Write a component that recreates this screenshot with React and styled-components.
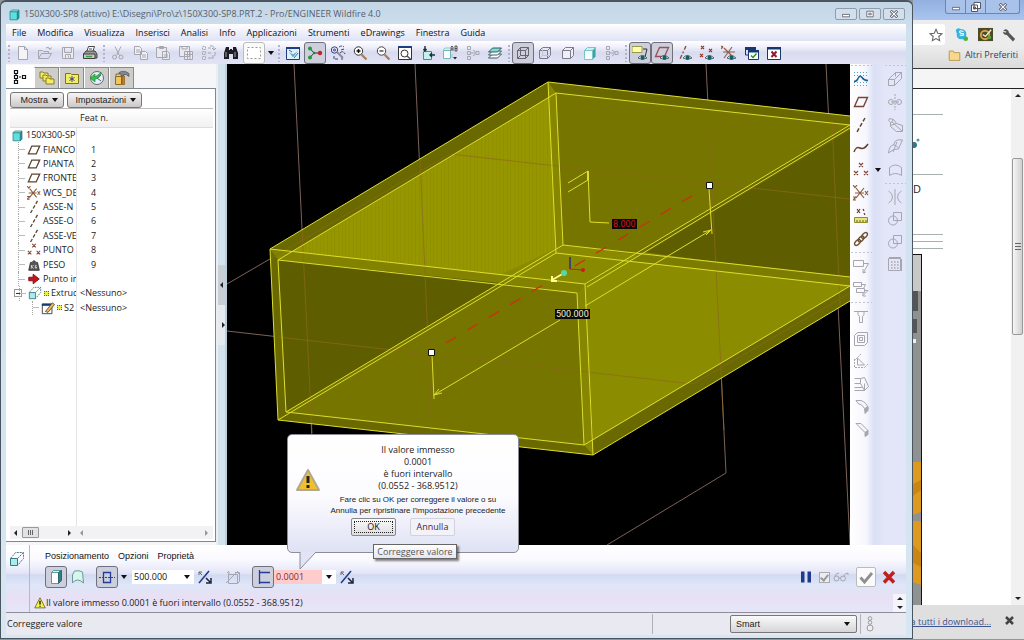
import React from 'react'
import styled, { createGlobalStyle } from 'styled-components'

const INK = '#222'
const GRAY = '#a6a6b0'
const BROWN = '#5c4630'

const GlobalStyle = createGlobalStyle`
  * {
    box-sizing: border-box;
  }
  body {
    margin: 0;
    font-family: 'Open Sans', sans-serif;
    font-size: 9px;
    line-height: 14px;
    color: ${INK};
  }
  button, input, select {
    font: inherit;
    color: inherit;
    margin: 0;
    padding: 0;
  }
`

const Desktop = styled.div`
  display: grid;
  grid-template-columns: minmax(0, 1fr) 111px;
  min-height: 100vh;
  background: #8e979c;
`

/* ---------- drawings ---------- */

const cube = (front, top, side, stroke) => (
  <g fill={front} stroke={stroke} strokeWidth="1">
    <path d="M2.500 4.500h9v10h-9z" />
    <path d="M2.500 4.500l2-2h9l-2 2z" fill={top} />
    <path d="M11.500 14.500l2-2v-10l-2 2z" fill={side} />
  </g>
)

const eye = (
  <g>
    <path d="M6 13q4-5 9 0q-5 3-9 0" fill="#e8f4f0" stroke="#345" strokeWidth=".8" />
    <circle cx="10.6" cy="12.7" r="2.1" fill="#126060" />
  </g>
)

const treeGray = (
  <path
    d="M2.500 1.500h3v3h-3zM2.500 6.500h3v3h-3zM2.500 11.500h3v3h-3zM5.500 8h5M11 6.500h3v3h-3zM8 5l2.500 2M8 11l2.500-2"
    fill="none"
    stroke={GRAY}
  />
)

const ICONS = {
  fresh: <path d="M3.500 1.500h6l3 3v10h-9zM9.500 1.500v3h3" fill="#f4f4f8" stroke={GRAY} />,
  open: <path d="M1.500 13.500v-8h4l1 1h5v2M1.500 13.500l3-5h10l-3 5zM9 3q3-2 4 1M11.500 3.500l2 1 1-2" fill="none" stroke={GRAY} />,
  save: <path d="M2.500 2.500h11v11h-11zM4.500 2.500v5h7v-5M5.500 13.500v-4h5v4M8.500 10.500v2" fill="#ebebf0" stroke={GRAY} />,
  print: (
    <g stroke="#333" strokeWidth=".9">
      <path d="M5 6l1.500-4.500h6L11 6" fill="#fff" />
      <path d="M1.500 9l2.500-3h9l2 3v4h-13.500z" fill="#9a9a9a" />
      <path d="M1.500 9h11.500v4.500h-11.500z" fill="#c9c9c4" />
      <path d="M4 11.500h6" stroke="#3aa23a" strokeWidth="1.500" />
      <path d="M7 4h3" />
    </g>
  ),
  cut: (
    <g fill="none" stroke={GRAY}>
      <path d="M5 1.500l4.500 9M11 1.500l-4.500 9" />
      <circle cx="4.500" cy="12" r="2" />
      <circle cx="11" cy="12" r="2" />
    </g>
  ),
  copy: <path d="M1.500 1.500h5l2 2v6h-7zM3 5h4M3 7h4M7.500 6.500h5l2 2v6h-7zM9 10h4M9 12h4" fill="#f0f0f5" stroke={GRAY} />,
  paste: <path d="M1.500 2.500h10v10h-10zM4.500 1.500h4v2h-4zM7.500 6.500h5l2 2v6h-7zM9 10h4M9 12h4" fill="#e9e9f0" stroke={GRAY} />,
  pasteSpecial: <path d="M1.500 1.500h10v10h-10zM4 1v3h5v-3M6.500 6.500h8v8h-8zM6.500 9.500h8M9.500 6.500v8M12 6.500v8" fill="#e9e9f0" stroke={GRAY} />,
  regen: (
    <g fill="none" stroke={GRAY}>
      <path d="M1.500 1.500h3v3h-3zM1.500 6.500h3v3h-3zM1.500 11.500h3v3h-3z" strokeDasharray="2 1" />
      <path d="M7 3h3M7 8h3M7 13h6M9 1q4-1 4 3M11 3l2 2 2-2M14 7q1 5-3 4" />
    </g>
  ),
  find: (
    <g fill="#1c1c22">
      <path d="M3 2h3v3h1V4h2v1h1V2h3l2 6v6h-5V9H6v5H1V8z" />
      <path d="M3 7v5M12 7v5" stroke="#9aa" />
    </g>
  ),
  marquee: <path d="M1.500 2.500h13v11h-13z" fill="#fff" stroke="#999" strokeDasharray="2 2" />,
  repaint: (
    <g>
      <path d="M1.500 2.500h13v12h-13z" fill="#dcf0fa" stroke="#223a78" />
      <path d="M1 2h14v2H1z" fill="#1d3f86" />
      <path d="M3 6l5 7 6-8-6 4z" fill="#5aa7d4" stroke="#fff" strokeWidth=".6" />
      <path d="M4 5l3 2M9 13l4-5" stroke="#3a6aa4" />
    </g>
  ),
  spin: (
    <g>
      <path d="M3 3.500l4 4.500l-4 4.500M7 8h6" fill="none" stroke="#333" />
      <circle cx="3" cy="3.500" r="2" fill="#1f9c3c" />
      <circle cx="3" cy="12.500" r="2" fill="#1f9c3c" />
      <circle cx="13" cy="8" r="2.200" fill="#c3242c" />
      <circle cx="7" cy="8" r="1.200" fill="#1f7c3c" />
    </g>
  ),
  orient: (
    <g fill="none" stroke="#3a3a86">
      <circle cx="4.500" cy="5" r="3.200" />
      <circle cx="4.500" cy="5" r="1" />
      <path d="M9 2q3-2 5 0M14 4l-3 1M10 8q3-3 5 1M4 11v3h4M12 12v3" strokeDasharray="3 1" />
      <path d="M7 7l6 6" stroke="#8d8d94" strokeWidth="2" />
    </g>
  ),
  zoomIn: (
    <g fill="none">
      <circle cx="6.500" cy="6" r="4.200" fill="#fff" stroke="#333" />
      <path d="M4.500 6h4M6.500 4v4" stroke="#111" strokeWidth="1.400" />
      <path d="M9.500 9.500l5 5" stroke="#a77f52" strokeWidth="2.200" />
    </g>
  ),
  zoomOut: (
    <g fill="none">
      <circle cx="6.500" cy="6" r="4.200" fill="#fff" stroke="#444" />
      <path d="M4.500 6h4" stroke="#444" strokeWidth="1.400" />
      <path d="M9.500 9.500l5 5" stroke="#a77f52" strokeWidth="2.200" />
    </g>
  ),
  refit: (
    <g fill="none">
      <path d="M1.500 1.500h13v13h-13z" fill="#fff" stroke="#333" />
      <path d="M1 1h14v2H1z" fill="#1d3f86" />
      <circle cx="7.500" cy="8.500" r="3.500" stroke="#333" />
      <path d="M10 11l3.500 3" stroke="#555" strokeWidth="1.600" />
    </g>
  ),
  reorient: (
    <g>
      <path d="M3.500 6.500h8v8h-8z" fill="#c5f0f0" stroke="#3f8f95" />
      <path d="M5 1v5M3.500 4L5 6l1.500-2M15 10h-5M12 8l-2 2 2 2" fill="none" stroke="#17323a" strokeWidth="1.400" />
    </g>
  ),
  views: (
    <g>
      <path d="M1.500 5.500h7v8h-7z" fill="#fff" stroke="#6fb9be" />
      <path d="M1 5l2-2h5M10 9v4" fill="none" stroke="#8ccacc" />
      <path d="M9 6V2l1-1 1 1v4M9 4h2M13 1h2v5h-2zM13 3.500h2" fill="none" stroke="#333" strokeWidth=".8" />
      <path d="M11 12h4l-2 2.500z" fill="#222" />
    </g>
  ),
  tree: treeGray,
  layers: (
    <g stroke="#2b4d58" strokeWidth=".9">
      <path d="M1.500 13l4-4h9l-4 4z" fill="#fff" />
      <path d="M1.500 10l4-4h9l-4 4z" fill="#fff" />
      <path d="M1.500 7l4-4h9l-4 4z" fill="#7fdcd2" />
    </g>
  ),
  wire: (
    <path
      d="M2.500 5.500h8v8h-8zM5.500 2.500h8v8h-8zM2.500 5.500l3-3M10.500 5.500l3-3M2.500 13.500l3-3M10.500 13.500l3-3"
      fill="none"
      stroke="#666672"
    />
  ),
  hidden: (
    <g fill="none" stroke="#7c7c88">
      <path d="M2.500 5.500h8v8h-8zM2.500 5.500l3-3h8v8l-3 3M10.500 5.500l3-3" />
      <path d="M5.500 2.500v8h8M5.500 10.500l-3 3" stroke="#c4c4ce" />
    </g>
  ),
  noHidden: (
    <path d="M2.500 5.500h8v8h-8zM2.500 5.500l3-3h8v8l-3 3M10.500 5.500l3-3" fill="#efeffa" stroke="#7c7c88" />
  ),
  shaded: (
    <g stroke="#7cc4c8">
      <path d="M2.500 5.500h8v9h-8z" fill="#f2ffff" />
      <path d="M2.500 5.500l3-3h8l-3 3z" fill="#c2f2f2" />
      <path d="M10.500 14.500l3-3v-9l-3 3z" fill="#3aa4a6" />
    </g>
  ),
  note: (
    <g>
      <path d="M0 1.500h10v6H0z" fill="#ffffa8" stroke="#99994a" />
      <path d="M11 4h4l-2 8" fill="none" stroke="#333" />
      {eye}
    </g>
  ),
  planeEye: (
    <g>
      <path d="M1.500 11.500l4-9h9l-4 9z" fill="none" stroke="#96505a" strokeWidth="1.300" />
      {eye}
    </g>
  ),
  axisEye: (
    <g>
      <path d="M9 1L3 14" stroke="#8a4a3a" strokeWidth="1.300" strokeDasharray="4 2 2 2" />
      {eye}
    </g>
  ),
  pointsEye: (
    <g>
      <path d="M2 1l3 3M5 1l-3 3M10 4l3 3M13 4l-3 3M1 9l3 3M4 9l-3 3" stroke="#94382e" strokeWidth="1.200" />
      {eye}
    </g>
  ),
  csysEye: (
    <g>
      <path d="M3 3l8 8M11 2l-8 11M2 7h12M0 1l2 2M2 1L0 4" stroke="#8f5a45" strokeWidth="1.100" />
      {eye}
    </g>
  ),
  activate: (
    <g>
      <path d="M1 2h11v3H1z" fill="#17386f" />
      <path d="M1.500 4v6h3" fill="none" stroke="#17386f" />
      <path d="M4.500 6.500h10v8h-10z" fill="#fff" stroke="#17386f" />
      <path d="M4 5h11v2.500H4z" fill="#17386f" />
      <path d="M7 10.500l2 2 3.500-4" fill="none" stroke="#2c8f2c" strokeWidth="1.500" />
    </g>
  ),
  closeWin: (
    <g>
      <path d="M1.500 2.500h13v12h-13z" fill="#fff" stroke="#17386f" />
      <path d="M1 2h14v2.500H1z" fill="#17386f" />
      <path d="M5.500 6.500l5 5.500M10.500 6.500l-5 5.500" stroke="#8c1f2c" strokeWidth="2" />
    </g>
  ),
  /* feature toolbar */
  sketch: (
    <g fill="none">
      <path d="M1 1.500h14M1 4.500h14M1 11.500h14M1 14.500h14" stroke="#4fa3cf" strokeDasharray="1 2" />
      <path d="M1 10.500q3 0 4-3q2-4 4-1t6 3" stroke="#1b5f92" strokeWidth="1.500" />
    </g>
  ),
  plane: <path d="M1.500 12.500l4-9h9l-4 9z" fill="none" stroke="#74463a" strokeWidth="1.400" />,
  treePlane: <path d="M1.500 12.500l4-9h9l-4 9z" fill="none" stroke={BROWN} strokeWidth="1.500" />,
  axis: <path d="M12 1L4 15" stroke={BROWN} strokeWidth="1.500" strokeDasharray="4 2" />,
  curve: <path d="M1 12q2-6 6-4t8-4" fill="none" stroke={BROWN} strokeWidth="1.500" />,
  points: <path d="M6 1l4 4M10 1l-4 4M1 9l4 4M5 9l-4 4M11 9l4 4M15 9l-4 4" stroke="#80483c" strokeWidth="1.200" />,
  csys: <path d="M2 8h9M3 3l8 10M11 3L3 13M12 6l3 4M15 6l-3 4M0 0l2 2.500L4 0M0 12h3l-3 3h3" fill="none" stroke="#8a5c3c" strokeWidth="1.200" />,
  ruler: (
    <g>
      <path d="M4 1l3 4M7 1L4 5M10 1l1 2M11 5l1 2" stroke="#6d3b2c" strokeWidth="1.200" />
      <path d="M1.500 9.500h13v5h-13z" fill="#e6e67c" stroke="#8d8d30" />
      <path d="M4 12v2M7 12v2M10 12v2M13 12v2" stroke="#666620" />
    </g>
  ),
  chain: (
    <g fill="none" stroke="#6d4f32" strokeWidth="1.400">
      <ellipse cx="4.500" cy="11.500" rx="3.500" ry="2" transform="rotate(-45 4.500 11.500)" />
      <ellipse cx="8" cy="8" rx="3.500" ry="2" transform="rotate(-45 8 8)" />
      <ellipse cx="11.500" cy="4.500" rx="3.500" ry="2" transform="rotate(-45 11.500 4.500)" />
    </g>
  ),
  noteG: <path d="M.5 2.500h10v6H.500zM10.500 5.500h5l-5 9M10 11v4l3-1" fill="none" stroke={GRAY} />,
  notesG: <path d="M.5 1.500h8v4H.500zM3.500 7.500h8v4h-8zM8.500 3.500h4l-2 4M11.500 9.500h3.500l-5 5M10 12v3h3" fill="none" stroke={GRAY} />,
  hole: <path d="M1 3.500h4v3l1.500 2v6h3v-6l1.500-2v-3h4M5 3.500h6" fill="none" stroke={GRAY} />,
  shell: <path d="M1.500 4.500l3-3h10v10l-3 3h-10zM4.500 4.500h7v7h-7zM6.500 6.500h3v3h-3z" fill="none" stroke={GRAY} />,
  rib: (
    <g fill="none" stroke={GRAY}>
      <path d="M1.500 6v8.500h10M8 1L1 8M11.500 14.500l4-4" strokeDasharray="2 1" />
      <path d="M4.500 5v7h7z" />
    </g>
  ),
  draft: <path d="M1.500 2.500h6v5h-6M7.500 2.500l4-1 4 9-4 4-4-7M1.500 11.500h8M1.500 14.500h10v-7" fill="none" stroke={GRAY} />,
  round: (
    <g stroke={GRAY}>
      <path d="M3 2.500h5q6 2 7 8l-3 3q0-6-7-8z" fill="#f4f4fa" />
      <path d="M12 13.500v-3l3-2v4l-3 3z" fill="#a6a6b0" />
    </g>
  ),
  chamfer: (
    <g stroke={GRAY}>
      <path d="M3 2.500h5l7 7-3 2-6-6z" fill="#f4f4fa" />
      <path d="M12 11.500l3-2v4l-3 2z" fill="#a6a6b0" />
    </g>
  ),
  extrudeG: <path d="M1.500 8.500h6v6h-6zM1.500 8.500l7-7h6v6l-7 7M7.500 8.500l7-7M8.500 1.500v4" fill="none" stroke={GRAY} />,
  revolveG: (
    <g fill="none" stroke={GRAY}>
      <circle cx="4" cy="8" r="2.500" />
      <circle cx="12" cy="8" r="2.500" />
      <path d="M8 0v16M4 8h8" strokeDasharray="2 1" />
    </g>
  ),
  sweepG: <path d="M2.500 1.500l4 1 3 4 6 2v6h-6l-6-5v-4l-2-2zM6.500 2.500l-3 4M9.500 6.500l-6 2M15 14L5 5" fill="none" stroke={GRAY} />,
  blendG: <path d="M1.500 14q1-8 5-8l2-4q3-2 7-1q-3 6-4 9q-5-1-10 4M6.500 6q3 0 5 3M6 13l4-10" fill="none" stroke={GRAY} />,
  styleG: <path d="M2.500 13.500v-8q6-5 12 0v8q-6-4-12 0z" fill="none" stroke={GRAY} />,
  mirrorG: <path d="M8 0v16M1.500 2q4 2 4 6t-4 6M14.500 2q-4 2-4 6t4 6" fill="none" stroke={GRAY} />,
  mergeG: (
    <g fill="none" stroke={GRAY}>
      <path d="M6.500 1.500h8v8h-8z" />
      <circle cx="6" cy="9.500" r="4.500" />
    </g>
  ),
  patternG: (
    <g stroke={GRAY} fill="none">
      <path d="M1.500 2.500h12v12h-12zM14.500 3v12M2 1.500h12" />
      <path d="M4 6h8M4 9h8M4 12h8" strokeDasharray="1.500 1.500" strokeWidth="1.500" />
    </g>
  ),
  /* navigator tabs */
  modelTree: <path d="M2.500 1.500h3v3h-3zM2.500 6.500h3v3h-3zM2.500 11.500h3v3h-3zM7 8h2M10.500 6.500h3v3h-3zM4 5v1M4 10v1" fill="#fff" stroke="#111" strokeWidth="1.200" />,
  folders: (
    <g fill="#f4ec62" stroke="#7c7420" strokeWidth=".9">
      <path d="M1 2h3l1 1h4v5H1z" />
      <path d="M4 5h3l1 1h4v5H4z" />
      <path d="M7 8h3l1 1h4v5H7z" />
    </g>
  ),
  favorites: (
    <g>
      <path d="M1.500 3.500h5l1 1h7v9h-13z" fill="#f4ec62" stroke="#7c7420" />
      <path d="M8 6v6M5.500 7.500l5 3M10.500 7.500l-5 3" stroke="#3a4a8a" />
    </g>
  ),
  history: (
    <g fill="none">
      <circle cx="8" cy="8" r="6.500" fill="#e4f0f8" stroke="#667" />
      <path d="M8 8l4-3M8 8l4 3" stroke="#4a5a8a" />
      <path d="M1 8l5-4v3q5-3 6-5q0 6-6 7v3z" fill="#35c14a" stroke="#1c7c30" strokeWidth=".6" />
    </g>
  ),
  tools: (
    <g>
      <path d="M1.500 6.500h6v8h-6z" fill="#edc65c" stroke="#8a6a22" />
      <path d="M2 6V4h3" fill="none" stroke="#8a6a22" />
      <path d="M5 2.500q5-3 10 1v3l-3-2H9.500v1.500H7V4H5z" fill="#7d8994" stroke="#444" strokeWidth=".6" />
      <path d="M8 6h2.500v8.500H8z" fill="#d07c24" stroke="#7c4a12" strokeWidth=".6" />
    </g>
  ),
  /* tree rows */
  part: cube('#5fe0e0', '#b5f5f5', '#1d8f95', '#2d8288'),
  weight: (
    <g>
      <path d="M2 14l2-9h2q2-4 4 0h2l2 9z" fill="#555" stroke="#333" />
      <path d="M5 8v4M7.500 8L5.500 10l2 2M11 8.500H9.500v3H11V10" fill="none" stroke="#fff" strokeWidth=".8" />
    </g>
  ),
  insert: <path d="M2 6h5V2.500l7 5.500-7 5.500V10H2z" fill="#c4141c" stroke="#7a0c12" />,
  extrude: (
    <g fill="none" stroke="#3a7a80">
      <path d="M1.500 7.500h7v7h-7z" fill="#a8ecec" />
      <path d="M1.500 7.500l5-6h8v6l-6 7M8.500 7.500l6-6" strokeDasharray="2 1" />
    </g>
  ),
  sketchRow: (
    <g>
      <path d="M1.500 3.500h11v11h-11z" fill="#fff" stroke="#333" />
      <path d="M1 3h12v2.500H1z" fill="#17386f" />
      <path d="M5 12l8-10 2.500 2L8 13z" fill="#e4bd5a" stroke="#333" strokeWidth=".8" />
    </g>
  ),
  /* dashboard */
  solid: (
    <g>
      <path d="M3.500 3.500h7v11h-7z" fill="#fff" stroke="#5c9a9c" />
      <path d="M3.500 3.500l2-2h8l-3 2z" fill="#d8f8f4" stroke="#5c9a9c" />
      <path d="M10.500 14.500l3-3v-10l-3 2z" fill="#2d8288" stroke="#2d6a70" />
    </g>
  ),
  surface: <path d="M2.500 14v-8l2-4q5-1 8 1l1 11q-3-3-6-3t-5 3z" fill="#d8f4ee" stroke="#6a9a96" />,
  symmetric: (
    <g fill="none" stroke="#263a9a">
      <path d="M4.500 3.500h7v10h-7z" strokeWidth="1.300" />
      <path d="M0 8.500h16" strokeDasharray="2 1" stroke="#444" />
    </g>
  ),
  flip: (
    <g fill="none" stroke="#1d3a8c" strokeWidth="1.500">
      <path d="M2 14L12 2" />
      <path d="M2 6V3h3M2 3l3 3" strokeWidth="1" stroke="#666" />
      <path d="M14 9v5h-5M14 14l-5-5" stroke="#1c2440" />
    </g>
  ),
  cutG: <path d="M3.500 5.500h9v9h-9zM1 14L13 2M4 3v3M2 4l2-2M12.500 5.500l2-2v9l-2 2M10 3.500h4" fill="none" stroke={GRAY} />,
  thicken: <path d="M15 3.500H4.500v10H15M4.500 1v14" fill="none" stroke="#263a9a" strokeWidth="1.300" />,
  warn: (
    <g>
      <path d="M8 1L1 14.500h14z" fill="#f5f04a" stroke="#55551a" strokeLinejoin="round" />
      <path d="M8 5v5M8 11.500v1.500" stroke="#111" strokeWidth="1.800" />
    </g>
  ),
  pause: <path d="M3 2.500h3.500v11H3zM9.500 2.500H13v11H9.500z" fill="#1d3c8c" />,
  glasses: (
    <g fill="none" stroke={GRAY}>
      <circle cx="3.500" cy="9.500" r="2.500" />
      <circle cx="10" cy="9.500" r="2.500" />
      <path d="M6 9h1.500M2 7q1-3 4-3M11 7q1-3 4-3v2" />
    </g>
  ),
  accept: <path d="M2.500 8.500l4 4.500L14 4" fill="none" stroke="#8f8f8f" strokeWidth="2.800" />,
  cancel: <path d="M3 3l10 10.500M13 3L3 13.500" stroke="#c0201c" strokeWidth="3.400" />,
  light: (
    <g fill="#eee" stroke="#999">
      <circle cx="8" cy="2.500" r="1.800" />
      <circle cx="8" cy="6.500" r="1.800" />
      <circle cx="8" cy="12" r="3" />
    </g>
  ),
  /* browser */
  star: <path d="M8 1.500l2 4.500 4.800.500-3.600 3.200 1 4.800L8 12l-4.200 2.500 1-4.800L1.200 6.500 6 6z" fill="#fff" stroke="#666" strokeWidth="1.200" />,
  skype: (
    <g>
      <path d="M2 3q2-3 5-1q7 0 6 7q1 4-3 4q-8 1-7-6q-1-2-1-4z" fill="#35b4e4" />
      <path d="M10 5q-4-2-4 0t4 2q1 3-4 1.500" fill="none" stroke="#fff" strokeWidth="1.300" />
      <circle cx="12.500" cy="12.500" r="2.500" fill="#4fae3c" />
    </g>
  ),
  plugin: (
    <g>
      <path d="M0 1h16v14H0z" fill="#4a4a2c" />
      <circle cx="7.500" cy="8.500" r="4.500" fill="none" stroke="#dca03c" strokeWidth="2" />
      <path d="M5 8l3 2 6-7" fill="none" stroke="#ece8c0" strokeWidth="1.600" />
      <circle cx="12" cy="11" r="2" fill="#5ca43c" />
    </g>
  ),
  wrench: <path d="M1.500 3l2-1.500q4 0 4.500 4l7 7-2.500 3-7-7.500q-4 0-4.500-4l3 1.500 1-1.500z" fill="#555" />,
  folder: <path d="M1.500 2.500h5l1 2h7v9.500h-13z" fill="#f6d98c" stroke="#b58b3c" />,
}

const Glyph = styled.svg`
  display: block;
  flex: none;
  width: ${p => p.$size || 16}px;
  height: ${p => p.$size || 16}px;
`

const Icon = ({ name, size }) => (
  <Glyph $size={size} viewBox="0 0 16 16" aria-hidden="true">
    {ICONS[name]}
  </Glyph>
)

const Caret = styled.span`
  display: inline-block;
  flex: none;
  border: 3px solid transparent;
  border-top: 4px solid #111;
  border-bottom: 0;
`

/* ---------- CAD window frame ---------- */

const CadWindow = styled.div`
  position: relative;
  display: flex;
  flex-direction: column;
  min-width: 0;
  padding: 0 6px 3px 5px;
  margin-bottom: 2px;
  border: 1px solid #4a5560;
  border-top-width: 2px;
  border-radius: 6px 6px 0 0;
  background: linear-gradient(#c3d6e6, #cfe0ee 30px, #d6e7f3);
`

const TitleBar = styled.header`
  display: flex;
  align-items: center;
  gap: 3px;
  height: 22px;
  padding: 2px 1px 0 2px;
  color: #55606c;
`

const Title = styled.h1`
  flex: 1;
  margin: 0;
  font-size: 9px;
  font-weight: normal;
  white-space: nowrap;
`

const WinButtons = styled.div`
  display: flex;
  gap: 2px;
`

const WinButton = styled.button`
  display: grid;
  place-items: center;
  width: 22px;
  height: 12px;
  border: 1px solid #8e9cab;
  border-radius: 2px;
  background: #d3e0eb;
`

const MenuBar = styled.nav`
  display: flex;
  align-items: center;
  gap: 11px;
  height: 17px;
  padding: 0 6px;
  background: linear-gradient(#fff, #eef0fa 50%, #dfe3f5);
`

const MenuItem = styled.button`
  border: 0;
  background: none;
  color: #111;
`

const ToolBar = styled.div`
  display: flex;
  align-items: center;
  height: 23px;
  background: linear-gradient(#fff, #f0f1fa 25%, #d9dcf0 50%, #e2e4f4);
`

const ToolGroup = styled.div`
  display: flex;
  justify-content: space-between;
  width: ${p => p.$width}px;
`

const ToolButton = styled.button`
  display: grid;
  flex: none;
  place-items: center;
  width: 22px;
  height: 22px;
  border: 1px solid ${p => (p.$pressed ? '#70707c' : p.$boxed ? '#bbb' : 'transparent')};
  border-radius: 3px;
  background: ${p => (p.$pressed ? '#cdcfdc' : p.$boxed ? '#fafafa' : 'none')};
`

const Grip = styled.span`
  flex: none;
  width: 6px;
  height: 18px;
  background: radial-gradient(circle, #b4b4c8 1px, transparent 1px) 0 0 / 6px 4px;
`

const CaretSlot = styled.span`
  display: grid;
  place-items: center;
  width: 11px;
`

/* ---------- navigator ---------- */

const Main = styled.div`
  display: flex;
  flex: 1;
  min-height: 0;
`

const Navigator = styled.aside`
  display: flex;
  flex-direction: column;
  width: 210px;
  padding-bottom: 3px;
  background: #f6f6f8;
`

const Tabs = styled.div`
  display: flex;
  align-items: flex-end;
  height: 24px;
`

const Tab = styled.button`
  display: grid;
  place-items: center;
  width: ${p => (p.$active ? 28 : 25)}px;
  height: ${p => (p.$active ? 23 : 21)}px;
  border: 1px solid ${p => (p.$active ? '#fff' : '#8a8a8a')};
  border-left-color: #fff;
  border-bottom: 0;
  background: ${p => (p.$active ? '#fff' : '#cfcdc9')};
`

const NavBody = styled.div`
  display: flex;
  flex: 1;
  flex-direction: column;
  padding: 3px 2px 0 4px;
  border: 1px solid #7f8790;
  border-left: 0;
  background: #fff;
`

const NavButtons = styled.div`
  display: flex;
  gap: 3px;
`

const NavButton = styled.button`
  display: flex;
  align-items: center;
  justify-content: flex-end;
  gap: 4px;
  width: ${p => p.$width}px;
  height: 16px;
  padding-right: 5px;
  border: 1px solid #777;
  border-radius: 3px;
  background: linear-gradient(#f6f5f5, #cbc8c8);
  font-family: 'Liberation Sans', sans-serif;
`

const Tree = styled.table`
  flex: 1;
  display: block;
  border-collapse: collapse;
  background: linear-gradient(90deg, transparent 66px, #e4e4e6 66px, #e4e4e6 67px, transparent 67px);

  thead, tbody {
    display: grid;
  }
  thead {
    height: 20px;
    border-top: 1px solid #bbb;
    border-bottom: 1px solid #ddd;
    background: linear-gradient(#fff, #f1f1f3);
  }
  tbody {
    height: 187px;
    grid-template-rows: repeat(13, 1fr);
  }
  tr {
    display: grid;
    grid-template-columns: 66px 1fr;
    align-items: center;
  }
  th, td {
    padding: 0;
    text-align: left;
    font-weight: normal;
    white-space: nowrap;
    overflow: hidden;
  }
  th {
    padding-left: 4px;
  }
`

const NodeName = styled.td`
  display: flex;
  align-items: center;
  gap: 2px;
  height: 100%;
  padding-left: ${p => [1, 8, 8, 22][p.$depth]}px !important;
`

const Branch = styled.span`
  flex: none;
  width: 7px;
  height: 100%;
  border-left: 1px dotted #aaa;
  background: linear-gradient(#bbb, #bbb) 0 50% / 7px 1px no-repeat;
`

const Expander = styled.button`
  display: grid;
  flex: none;
  place-items: center;
  width: 8px;
  height: 8px;
  margin-left: -4px;
  margin-right: -5px;
  border: 1px solid #999;
  background: #fff;

  &::after {
    content: '';
    width: 4px;
    height: 1px;
    background: #333;
  }
`

const Pending = styled.span`
  flex: none;
  width: 5px;
  height: 5px;
  border: 1px dotted #6c6c00;
  background: #ecec4a;
`

const Value = styled.td`
  padding-left: ${p => (p.$number ? 15 : 4)}px !important;
`

const NavScroll = styled.div`
  display: grid;
  grid-template-columns: 66px 1fr;
  height: 13px;
  margin-bottom: 2px;
`

const HBar = styled.div`
  display: flex;
  align-items: center;
  gap: 5px;
  padding: 0 5px 0 4px;
  background: #f2f2f4;
`

const Arrow = styled.span`
  flex: none;
  border: 3px solid transparent;
  ${p => p.$dir === 'left' && `border-right: 3px solid ${p.$dim ? '#999' : '#222'}; border-left: 0;`}
  ${p => p.$dir === 'right' && `border-left: 3px solid ${p.$dim ? '#999' : '#222'}; border-right: 0; margin-left: auto;`}
  ${p => p.$dir === 'up' && 'border-bottom: 3px solid #222; border-top: 0;'}
  ${p => p.$dir === 'down' && 'border-top: 3px solid #222; border-bottom: 0;'}
`

const HThumb = styled.span`
  width: 17px;
  height: 11px;
  border: 1px solid #999;
  border-radius: 1px;
  background: repeating-linear-gradient(90deg, #666 0 1px, transparent 1px 2px) center / 6px 5px no-repeat, #e2e2e4;
`

const Sash = styled.div`
  display: flex;
  flex: none;
  flex-direction: column;
  justify-content: center;
  align-items: center;
  width: 11px;
  border-left: 2px solid #e8eef4;
  border-right: 2px solid #b8d0e0;
  background: #d4e2ed;
`

const SashHandle = styled.button`
  display: grid;
  place-items: center;
  width: 7px;
  height: 40px;
  border: 0;
  background: ${p => p.$tone};
`

/* ---------- graphics area ---------- */

const Viewport = styled.main`
  flex: 1;
  min-width: 0;
  background: #000;
`

const Scene = styled.svg`
  display: block;
  width: 100%;
  height: 100%;
`

const Model = () => (
  <Scene viewBox="227 64 623 481" preserveAspectRatio="xMinYMin slice" role="img" aria-label="150X300-SP8">
    <defs>
      <pattern id="grain" width="11" height="8" patternUnits="userSpaceOnUse">
        <path d="M1.500 0v8M4.500 0v8M8.500 0v8" stroke="#858500" strokeOpacity=".35" />
      </pattern>
    </defs>
    <g stroke="#7c6258" fill="none">
      <path d="M294 64L302 229L312 440M415 64L432 440M706 64L726 473M826 64L850 545" />
      <path d="M227 284L450 154M227 331L693 384M726 473L607 545" />
    </g>
    <path d="M270 249L548 82L850 116V301L593 455L278 420z" fill="#696900" />
    <path d="M556 93L850 125L585 284L563 245z" fill="#757500" />
    <path d="M850 130V277L642 255z" fill="#5e5e00" />
    <path d="M278 260L556 93L563 245L500 283z" fill="#969600" />
    <path d="M330 229L556 93L563 245L500 283L278 260z" fill="url(#grain)" />
    <path d="M548 82L556 93L563 245L556 253z" fill="#868600" />
    <path d="M563 245L640 255L585 284L500 275z" fill="#8a8a00" />
    <path d="M585 285L642 252L850 280V286L593 440z" fill="#8c8c00" />
    <path d="M642 253L850 277V286L628 261z" fill="#7c7c00" />
    <path d="M270 249L585 284L577 293L278 260z" fill="#828200" />
    <path d="M278 260L500 283L286 412z" fill="#5e5e00" />
    <path d="M286 412L500 283L577 293L584 445z" fill="#757500" />
    <path d="M577 293L585 284L593 455L584 445z" fill="#868600" />
    <g fill="none" stroke="#8c6a1c" strokeOpacity=".7">
      <path d="M302 229L312 433M420 158L432 433M709 128L724 430M832 120L840 305" />
      <path d="M270 259L450 154L850 199M278 337L693 384L850 293" />
    </g>
    <g fill="none" stroke="#dede2c" strokeWidth="1">
      <path d="M850 116L548 82L270 249L278 420L593 455L850 301" />
      <path d="M850 125L556 93L278 260L286 412L584 445L850 286" />
      <path d="M270 249L585 284L593 455M278 260L577 293L584 445" />
      <path d="M548 82L556 253L850 286M556 93L563 245L850 277" />
      <path d="M585 284L850 125M587 287L850 128M278 420L556 253M286 412L563 245" />
      <path d="M432 355L434 399M434 395L560 320M585 306L711 230M709 189L712 234" />
      <path d="M434 395l8-2M434 395l5-6M711 230l-8 2M711 230l-5 5" />
      <path d="M568 183L588 171L590 222L609 223M568 192L588 180" />
      <path d="M588 171v9" strokeWidth="2" />
    </g>
    <path d="M446 343L700 191" stroke="#cc3010" strokeWidth="1.300" strokeDasharray="12 13" />
    <path d="M570 269v-12" stroke="#3c4478" strokeWidth="2" />
    <path d="M570 269l13 1" stroke="#c81e1e" strokeWidth="1" />
    <circle cx="583" cy="270" r="2" fill="#c81e1e" />
    <path d="M564 273L552 280M552 276v5h5" fill="none" stroke="#ffff8c" strokeWidth="2" />
    <circle cx="564" cy="273" r="3" fill="#54d8a8" />
    <path d="M428.500 349.500h6v6h-6zM706.500 182.500h6v6h-6z" fill="#fff" stroke="#111" />
    <path d="M555 309h35v10h-35zM612 219h25v10h-25z" fill="#0a0a0a" />
    <g fontFamily="Roboto, sans-serif" fontSize="9">
      <text x="556" y="317" fill="#f0f0d0">500.000</text>
      <text x="613" y="227" fill="#d01414">8.000</text>
    </g>
  </Scene>
)

/* ---------- feature toolbar ---------- */

const FeatureBar = styled.div`
  display: grid;
  flex: none;
  grid-template-columns: 22px 12px 22px;
  width: 56px;
  background: linear-gradient(90deg, #fff, #f6f6fd 16px, #dbe0f5 24px, #e4e6f8 36px, #e2e6f8);
`

const FeatureColumn = styled.div`
  display: flex;
  flex-direction: column;
  gap: 1px;
`

const FeatureGroup = styled.div`
  display: flex;
  flex-direction: column;
  justify-content: space-between;
  height: ${p => p.$height}px;
`

const HGrip = styled.span`
  flex: none;
  width: 22px;
  height: 3px;
  background: radial-gradient(circle, #c0c4d4 1px, transparent 1px) 0 0 / 4px 3px;
`

const FeatureCaret = styled.span`
  padding: 98px 0 0 3px;
`

/* ---------- dashboard ---------- */

const Dashboard = styled.section`
  display: grid;
  grid-template-columns: 24px 1fr;
  height: 68px;
  border-bottom: 1px solid #8e8e9a;
  background: linear-gradient(#fff, #fafaff 14px, #e4e6f7 28px, #d2daf2 30px, #dfe6f8 40px, #e8e0f4 52px, #e6e6f8);
`

const DashSide = styled.div`
  padding: 6px 0 0 3px;
  border-right: 1px solid #b8b8c4;
`

const DashBody = styled.div`
  display: flex;
  flex-direction: column;
  min-width: 0;
`

const DashTabs = styled.div`
  display: flex;
  gap: 9px;
  padding: 5px 0 0 15px;
`

const DashTab = styled.button`
  border: 0;
  background: none;
  font-family: 'Liberation Sans', sans-serif;
  line-height: 12px;
  color: #111;
`

const Controls = styled.div`
  display: flex;
  align-items: center;
  height: 22px;
  margin-top: 4px;
  padding: 0 7px 0 15px;
`

const Space = styled.span`
  flex: ${p => (p.$width ? `0 0 ${p.$width}px` : 1)};
`

const Combo = styled.div`
  display: flex;
  align-items: center;
  width: ${p => p.$width}px;
  height: 14px;
  padding-right: 3px;
  background: linear-gradient(90deg, ${p => (p.$error ? '#fcc' : '#fff')} 48px, #fff 48px);

  input {
    flex: 1;
    min-width: 0;
    height: 14px;
    padding-left: 2px;
    border: 0;
    outline: 0;
    background: none;
    color: ${p => (p.$error ? '#7c2c34' : '#111')};
  }
`

const DropButton = styled.button`
  display: grid;
  place-items: center;
  width: 8px;
  height: 14px;
  border: 0;
  background: none;
`

const Preview = styled.label`
  display: flex;
  align-items: center;
  gap: 3px;
  margin-right: 7px;

  input {
    display: grid;
    place-items: center;
    appearance: none;
    width: 11px;
    height: 11px;
    border: 1px solid #aaa;
    background: #ececf4;
  }
  input:checked::after {
    content: '';
    width: 3px;
    height: 6px;
    border: solid #999;
    border-width: 0 2px 2px 0;
    transform: rotate(40deg);
  }
`

const AcceptButton = styled.button`
  display: grid;
  place-items: center;
  width: 20px;
  height: 20px;
  border: 1px solid #bbb;
  border-radius: 2px;
  background: #fbfbfd;
`

const CancelButton = styled(AcceptButton)`
  margin-left: 3px;
  border-color: transparent;
  background: none;
`

const Message = styled.div`
  display: flex;
  align-items: center;
  flex: 1;
  margin-top: 6px;
  padding: 0 0 0 4px;

  p {
    flex: 1;
    margin: 0;
  }
`

const Spin = styled.div`
  display: flex;
  flex-direction: column;
  align-items: center;
  justify-content: space-around;
  align-self: stretch;
  width: 13px;
  background: #f4f4fa;
`

const StatusBar = styled.footer`
  display: flex;
  align-items: center;
  height: 22px;
  background: #e9e9f2;
`

const StatusText = styled.span`
  flex: 1;
  padding-left: 1px;
`

const Divider = styled.span`
  width: 1px;
  height: 20px;
  margin-right: ${p => p.$after}px;
  background: #b0b0b8;
`

const Filter = styled.span`
  display: flex;
  align-items: center;
  width: 127px;
  margin-right: 3px;
  border: 1px solid #777;
  border-radius: 2px;
  background: linear-gradient(#fafafa, #d6d6da);

  select {
    flex: 1;
    height: 16px;
    padding-left: 5px;
    border: 0;
    appearance: none;
    background: none;
    font-family: 'Liberation Sans', sans-serif;
  }
  span {
    margin-right: 6px;
  }
`

/* ---------- warning balloon ---------- */

const Balloon = styled.div`
  position: absolute;
  left: 286px;
  top: 432px;
  width: 232px;
  height: 119px;
  padding: 9px 8px 0 6px;
  border: 1px solid #8c8c96;
  border-radius: 5px;
  background: linear-gradient(#fff, #fcfcff 60px, #dfe2f4);
  text-align: center;
`

const BalloonBody = styled.div`
  display: flex;
  align-items: center;
  gap: 4px;
`

const BalloonText = styled.div`
  flex: 1;
  white-space: nowrap;

  p {
    margin: 0;
    line-height: 12px;
  }
  p + p {
    margin-top: 2px;
    font-family: 'Liberation Sans', sans-serif;
    font-size: 8px;
    line-height: 11px;
  }
`

const BalloonButtons = styled.div`
  display: flex;
  gap: 14px;
  margin-top: 2px;
  padding-left: 57px;
`

const BalloonButton = styled.button`
  width: 45px;
  height: 18px;
  border: 1px solid ${p => (p.$primary ? '#888' : '#d2d2dc')};
  border-radius: 2px;
  outline: ${p => (p.$primary ? '1px dotted #222' : 'none')};
  outline-offset: -4px;
  background: ${p => (p.$primary ? 'linear-gradient(#fafafa, #dedee2)' : '#f2f2f8')};
  color: ${p => (p.$primary ? '#111' : '#4c2440')};
`

const Tail = styled.svg`
  position: absolute;
  left: 10px;
  top: 117px;
  width: 20px;
  height: 18px;
`

const Tip = styled.div`
  position: absolute;
  left: 85px;
  top: 109px;
  width: 84px;
  border: 1px solid #666;
  background: linear-gradient(#fff, #e6e6f0);
  box-shadow: 2px 2px 2px rgba(0, 0, 0, 0.5);
  color: #555;
  line-height: 13px;
  white-space: nowrap;
`

/* ---------- browser behind ---------- */

const Browser = styled.div`
  display: flex;
  flex-direction: column;
  min-width: 0;
  margin-bottom: 2px;
  background: #fff;
  overflow: hidden;
`

const BrowserTitle = styled.div`
  display: flex;
  justify-content: flex-end;
  height: 20px;
  padding-right: 4px;
  background: linear-gradient(#92b0e0, #a9c4ee);
`

const BrowserWinButton = styled.button`
  display: grid;
  place-items: center;
  width: ${p => p.$width}px;
  height: 14px;
  border: 1px solid #6e86ae;
  border-top: 0;
  border-left-width: ${p => (p.$first ? 1 : 0)}px;
  border-radius: ${p => (p.$first ? '0 0 0 3px' : p.$last ? '0 0 3px 0' : 0)};
  background: #a9c2ea;
`

const BrowserBar = styled.div`
  display: flex;
  align-items: center;
  gap: 9px;
  height: 26px;
  padding-top: 3px;
  background: #ececec;
`

const Address = styled.div`
  display: grid;
  place-items: center end;
  width: 32px;
  height: 21px;
  padding-right: 2px;
  border-radius: 0 3px 3px 0;
  background: #fff;
`

const Bookmarks = styled.div`
  display: flex;
  align-items: center;
  justify-content: flex-end;
  gap: 4px;
  height: 23px;
  padding: 0 6px 4px 0;
  border-bottom: 1px solid #333;
  background: linear-gradient(#ececec, #dadada);
  color: #33405e;
  white-space: nowrap;
`

const Infobar = styled.div`
  height: 20px;
  border-bottom: 1px solid #222;
  background: #f5f5f5;
`

const Page = styled.div`
  display: flex;
  flex: 1;
`

const PageBody = styled.div`
  display: flex;
  flex: 1;
  flex-direction: column;
  align-items: flex-start;
`

const Rule = styled.hr`
  width: 30px;
  height: 1px;
  margin: ${p => p.$top}px 0 0;
  border: 0;
  background: #a8b0b0;
`

const Badge = styled.svg`
  width: 8px;
  height: 12px;
  margin-top: 22px;
`

const Letter = styled.span`
  margin-top: 7px;
  font-size: 11px;
`

const Photo = styled.svg`
  flex: 1;
  width: 9px;
  margin-top: 5px;
  border: solid #111;
  border-width: 1px 1px 0 0;
`

const VScroll = styled.div`
  display: flex;
  flex-direction: column;
  align-items: center;
  width: 13px;
  padding: 5px 0;
  background: #f1f1f1;
`

const VThumb = styled.span`
  width: 11px;
  height: 177px;
  margin: 61px 0 auto;
  border: 1px solid #999;
  border-radius: 2px;
  background: repeating-linear-gradient(#666 0 1px, transparent 1px 3px) center / 6px 8px no-repeat,
    linear-gradient(90deg, #f6f6f6, #d0d0d4);
`

const Downloads = styled.div`
  display: flex;
  align-items: center;
  justify-content: flex-end;
  gap: 14px;
  height: 34px;
  padding-right: 10px;
  background: #dfdfdf;
  white-space: nowrap;

  a {
    color: #3c5490;
  }
  button {
    border: 0;
    background: none;
  }
`

const MENU = [
  'File', 'Modifica', 'Visualizza', 'Inserisci', 'Analisi', 'Info',
  'Applicazioni', 'Strumenti', 'eDrawings', 'Finestra', 'Guida',
]

const TOOL_GROUPS = [
  { width: 89, items: ['fresh', 'open', 'save', 'print'] },
  { width: 158, items: ['cut', 'copy', 'paste', 'pasteSpecial', 'regen', 'find', 'marquee'], caret: true },
  { width: 224, items: ['repaint', 'spin', 'orient', 'zoomIn', 'zoomOut', 'refit', 'reorient', 'views', 'tree', 'layers'] },
  { width: 111, items: ['wire', 'hidden', 'noHidden', 'shaded', 'tree'] },
  { width: 156, items: ['note', 'planeEye', 'axisEye', 'pointsEye', 'csysEye', 'activate', 'closeWin'] },
]

const PRESSED = ['spin', 'wire', 'note', 'planeEye']

const TREE = [
  { icon: 'part', name: '150X300-SP', depth: 0 },
  { icon: 'treePlane', name: 'FIANCO', depth: 1, value: 1 },
  { icon: 'treePlane', name: 'PIANTA', depth: 1, value: 2 },
  { icon: 'treePlane', name: 'FRONTE', depth: 1, value: 3 },
  { icon: 'csys', name: 'WCS_DE', depth: 1, value: 4 },
  { icon: 'axis', name: 'ASSE-N', depth: 1, value: 5 },
  { icon: 'axis', name: 'ASSE-O', depth: 1, value: 6 },
  { icon: 'axis', name: 'ASSE-VE', depth: 1, value: 7 },
  { icon: 'points', name: 'PUNTO', depth: 1, value: 8 },
  { icon: 'weight', name: 'PESO', depth: 1, value: 9 },
  { icon: 'insert', name: 'Punto in', depth: 1 },
  { icon: 'extrude', name: 'Extrud', depth: 2, pending: true, value: '<Nessuno>' },
  { icon: 'sketchRow', name: 'S2', depth: 3, pending: true, value: '<Nessuno>' },
]

const FEATURES_LEFT = [
  { height: 182, items: ['sketch', 'plane', 'axis', 'curve', 'points', 'csys', 'ruler', 'chain'] },
  { height: 45, items: ['noteG', 'notesG'] },
  { height: 135, items: ['hole', 'shell', 'rib', 'draft', 'round', 'chamfer'] },
]

const FEATURES_RIGHT = [
  { height: 113, items: ['extrudeG', 'revolveG', 'sweepG', 'blendG', 'styleG'] },
  { height: 89, items: ['mirrorG', 'mergeG', 'mergeG', 'patternG'] },
]

const FeatureList = ({ groups }) => (
  <FeatureColumn>
    {groups.map(group => (
      <React.Fragment key={group.height}>
        <HGrip />
        <FeatureGroup $height={group.height}>
          {group.items.map((name, i) => (
            <ToolButton key={name + i} aria-label={name}>
              <Icon name={name} />
            </ToolButton>
          ))}
        </FeatureGroup>
      </React.Fragment>
    ))}
  </FeatureColumn>
)

const ModelTree = () => (
  <Tree>
    <thead>
      <tr>
        <th />
        <th scope="col">Feat n.</th>
      </tr>
    </thead>
    <tbody>
      {TREE.map(row => (
        <tr key={row.name}>
          <NodeName $depth={row.depth}>
            {row.depth === 2 && <Expander aria-label="Comprimi" />}
            {row.depth > 0 && <Branch />}
            <Icon name={row.icon} size={row.depth ? 14 : 13} />
            {row.pending && <Pending />}
            {row.name}
          </NodeName>
          <Value $number={typeof row.value === 'number'}>{row.value}</Value>
        </tr>
      ))}
    </tbody>
  </Tree>
)

const WinGlyph = ({ type, size }) => (
  <Glyph $size={size} viewBox="0 0 10 10" aria-hidden="true">
    {type === 'min' && <path d="M.500 5.500h9v3h-9z" fill="#fff" stroke="#556" />}
    {type === 'max' && <path d="M1 1.500h8v7H1zM3.500 4h3v2h-3z" fill="#fff" stroke="#556" />}
    {type === 'restore' && <path d="M3 .500h6.500v6H3zM.500 3h6v6.500h-6zM2.500 5h2v2h-2z" fill="#fff" stroke="#556" />}
    {type === 'close' && (
      <g>
        <path d="M1 1l8 8M9 1L1 9" stroke="#556" strokeWidth="3.500" />
        <path d="M1.500 1.500l7 7M8.500 1.500l-7 7" stroke="#fff" strokeWidth="1.500" />
      </g>
    )}
  </Glyph>
)

const DashboardPanel = () => (
  <Dashboard>
    <DashSide>
      <Icon name="extrude" />
    </DashSide>
    <DashBody>
      <DashTabs>
        <DashTab>Posizionamento</DashTab>
        <DashTab>Opzioni</DashTab>
        <DashTab>Proprietà</DashTab>
      </DashTabs>
      <Controls>
        <ToolButton $pressed aria-label="Solido"><Icon name="solid" /></ToolButton>
        <ToolButton aria-label="Superficie"><Icon name="surface" /></ToolButton>
        <Space $width={7} />
        <ToolButton $pressed aria-label="Simmetrico"><Icon name="symmetric" /></ToolButton>
        <CaretSlot><Caret /></CaretSlot>
        <Space $width={3} />
        <Combo $width={62}>
          <input aria-label="Profondità" defaultValue="500.000" />
          <DropButton aria-label="Valori profondità"><Caret /></DropButton>
        </Combo>
        <ToolButton aria-label="Inverti"><Icon name="flip" /></ToolButton>
        <Space $width={6} />
        <ToolButton aria-label="Rimuovi materiale"><Icon name="cutG" /></ToolButton>
        <Space $width={8} />
        <ToolButton $pressed aria-label="Ispessisci"><Icon name="thicken" /></ToolButton>
        <Combo $width={62} $error>
          <input aria-label="Spessore" defaultValue="0.0001" />
          <DropButton aria-label="Valori spessore"><Caret /></DropButton>
        </Combo>
        <ToolButton aria-label="Inverti lato"><Icon name="flip" /></ToolButton>
        <Space />
        <ToolButton aria-label="Pausa"><Icon name="pause" /></ToolButton>
        <Space $width={2} />
        <Preview>
          <input type="checkbox" defaultChecked aria-label="Anteprima" />
          <Icon name="glasses" />
        </Preview>
        <AcceptButton aria-label="Conferma"><Icon name="accept" /></AcceptButton>
        <CancelButton aria-label="Annulla feature"><Icon name="cancel" /></CancelButton>
      </Controls>
      <Message>
        <Icon name="warn" size={12} />
        <p>Il valore immesso 0.0001 è fuori intervallo (0.0552 - 368.9512)</p>
        <Spin>
          <Arrow $dir="up" />
          <Arrow $dir="down" />
        </Spin>
      </Message>
    </DashBody>
  </Dashboard>
)

const Warning = () => (
  <Balloon role="dialog" aria-label="Valore fuori intervallo">
    <BalloonBody>
      <Glyph $size={28} viewBox="0 0 28 28" aria-hidden="true">
        <path d="M14 4L3 24h22z" fill="#f2c02c" stroke="#b0a890" strokeWidth="2" strokeLinejoin="round" />
        <path d="M14 10v7M14 19v3" stroke="#222" strokeWidth="3" />
      </Glyph>
      <BalloonText>
        <p>
          Il valore immesso<br />0.0001<br />è fuori intervallo<br />(0.0552 - 368.9512)
        </p>
        <p>
          Fare clic su OK per correggere il valore o su<br />
          Annulla per ripristinare l'impostazione precedente
        </p>
      </BalloonText>
    </BalloonBody>
    <BalloonButtons>
      <BalloonButton $primary>OK</BalloonButton>
      <BalloonButton>Annulla</BalloonButton>
    </BalloonButtons>
    <Tail viewBox="0 0 20 18" aria-hidden="true">
      <path d="M2 0v17L18 0z" fill="#e2e4f5" />
      <path d="M2 0v17L18 0" fill="none" stroke="#8c8c96" />
    </Tail>
    <Tip role="tooltip">Correggere valore</Tip>
  </Balloon>
)

const BrowserWindow = () => (
  <Browser>
    <BrowserTitle>
      <BrowserWinButton $width={21} $first aria-label="Riduci"><WinGlyph type="min" size={8} /></BrowserWinButton>
      <BrowserWinButton $width={20} aria-label="Ripristina"><WinGlyph type="restore" size={10} /></BrowserWinButton>
      <BrowserWinButton $width={34} $last aria-label="Chiudi"><WinGlyph type="close" size={8} /></BrowserWinButton>
    </BrowserTitle>
    <BrowserBar>
      <Address><Icon name="star" size={14} /></Address>
      <Icon name="skype" size={15} />
      <Icon name="plugin" size={15} />
      <Icon name="wrench" size={14} />
    </BrowserBar>
    <Bookmarks>
      <Icon name="folder" size={13} />
      Altri Preferiti
    </Bookmarks>
    <Infobar />
    <Page>
      <PageBody>
        <Rule $top={25} />
        <Badge viewBox="0 0 8 12" aria-hidden="true">
          <circle cx="1" cy="8" r="3" fill="#2c7c88" />
          <circle cx="5" cy="3" r="1.500" fill="#5a98a0" />
        </Badge>
        <Rule $top={25} />
        <Letter>D</Letter>
        <Rule $top={38} />
        <Rule $top={6} />
        <Rule $top={6} />
        <Photo viewBox="0 0 8 350" preserveAspectRatio="none" aria-hidden="true">
          <path d="M0 0h8v350H0z" fill="#8f9291" />
          <path d="M0 0h8v36H0z" fill="#c8c8c6" />
          <path d="M0 36h5v20H0zM0 64h4v14H0z" fill="#555" />
          <path d="M0 84h3v4H0z" fill="#eee" />
          <path d="M0 207h8v50l-8 3zM0 266h8v64l-8-3z" fill="#dc9a20" />
          <path d="M0 229l8-4v10l-8 6zM0 290l8 8v14l-8-4z" fill="#c98616" />
        </Photo>
      </PageBody>
      <VScroll>
        <Arrow $dir="up" />
        <VThumb />
        <Arrow $dir="down" />
      </VScroll>
    </Page>
    <Downloads>
      <a href="#downloads">a tutti i download...</a>
      <button aria-label="Chiudi barra">
        <svg width="9" height="9" viewBox="0 0 9 9" aria-hidden="true">
          <path d="M1 1l7 7M8 1L1 8" stroke="#444" strokeWidth="2.500" />
        </svg>
      </button>
    </Downloads>
  </Browser>
)

const App = () => (
  <>
    <GlobalStyle />
    <Desktop>
      <CadWindow>
        <TitleBar>
          <Icon name="part" size={13} />
          <Title>150X300-SP8 (attivo) E:\Disegni\Pro\z\150X300-SP8.PRT.2 - Pro/ENGINEER Wildfire 4.0</Title>
          <WinButtons>
            <WinButton aria-label="Riduci"><WinGlyph type="min" size={8} /></WinButton>
            <WinButton aria-label="Ingrandisci"><WinGlyph type="max" size={8} /></WinButton>
            <WinButton aria-label="Chiudi"><WinGlyph type="close" size={8} /></WinButton>
          </WinButtons>
        </TitleBar>
        <MenuBar>
          {MENU.map(label => (
            <MenuItem key={label}>{label}</MenuItem>
          ))}
        </MenuBar>
        <ToolBar>
          {TOOL_GROUPS.map(group => (
            <React.Fragment key={group.width}>
              <Grip />
              <ToolGroup $width={group.width}>
                {group.items.map(name => (
                  <ToolButton key={name} $pressed={PRESSED.includes(name)} $boxed={name === 'marquee'} aria-label={name}>
                    <Icon name={name} />
                  </ToolButton>
                ))}
              </ToolGroup>
              {group.caret && <CaretSlot><Caret /></CaretSlot>}
            </React.Fragment>
          ))}
        </ToolBar>
        <Main>
          <Navigator>
            <Tabs>
              <Tab $active aria-label="Albero modello"><Icon name="modelTree" /></Tab>
              <Tab aria-label="Cartelle"><Icon name="folders" /></Tab>
              <Tab aria-label="Preferiti"><Icon name="favorites" /></Tab>
              <Tab aria-label="Cronologia"><Icon name="history" /></Tab>
              <Tab aria-label="Strumenti"><Icon name="tools" /></Tab>
            </Tabs>
            <NavBody>
              <NavButtons>
                <NavButton $width={54}>Mostra<Caret /></NavButton>
                <NavButton $width={75}>Impostazioni<Caret /></NavButton>
              </NavButtons>
              <ModelTree />
              <NavScroll>
                <HBar>
                  <Arrow $dir="left" />
                  <HThumb />
                  <Arrow $dir="right" />
                </HBar>
                <HBar>
                  <Arrow $dir="left" $dim />
                  <Arrow $dir="right" $dim />
                </HBar>
              </NavScroll>
            </NavBody>
          </Navigator>
          <Sash>
            <SashHandle $tone="#c9ced6" aria-label="Nascondi navigatore"><Arrow $dir="left" /></SashHandle>
            <SashHandle $tone="#e6eaee" aria-label="Mostra browser"><Arrow $dir="right" /></SashHandle>
          </Sash>
          <Viewport>
            <Model />
          </Viewport>
          <FeatureBar>
            <FeatureList groups={FEATURES_LEFT} />
            <FeatureCaret><Caret /></FeatureCaret>
            <FeatureList groups={FEATURES_RIGHT} />
          </FeatureBar>
        </Main>
        <DashboardPanel />
        <StatusBar>
          <StatusText>Correggere valore</StatusText>
          <Divider $after={77} />
          <Filter>
            <select aria-label="Filtro selezione" defaultValue="Smart">
              <option>Smart</option>
            </select>
            <Caret />
          </Filter>
          <Divider $after={1} />
          <Icon name="light" />
          <Space $width={28} />
        </StatusBar>
        <Warning />
      </CadWindow>
      <BrowserWindow />
    </Desktop>
  </>
)

export default App
